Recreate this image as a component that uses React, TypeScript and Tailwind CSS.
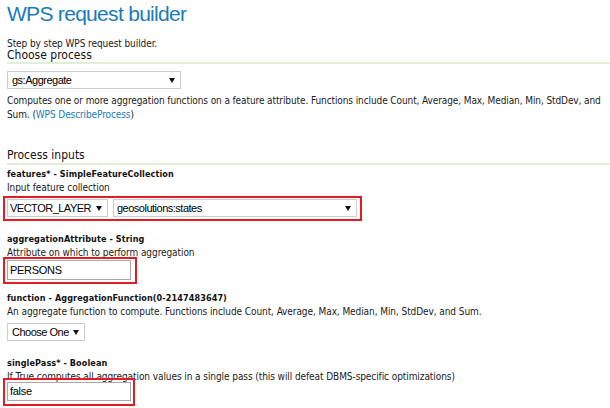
import React from "react";

const Arrow = () => (
  <svg width="6" height="5" viewBox="0 0 6 5" className="shrink-0">
    <polygon points="0,0 6,0 3,5" fill="#111" />
  </svg>
);

function FakeSelect({
  value,
  className,
  textClass = "pl-[4px]",
}: {
  value: string;
  className: string;
  textClass?: string;
}) {
  return (
    <div
      className={
        "flex h-[18px] items-center justify-between border border-[#cdcdcd] bg-white pr-[5px] font-['Liberation_Sans',Arial,sans-serif] text-[11px] leading-[16px] tracking-[-0.5px] text-black " +
        className
      }
    >
      <span className={"whitespace-nowrap " + textClass}>{value}</span>
      <Arrow />
    </div>
  );
}

function FakeInput({ value, className }: { value: string; className: string }) {
  return (
    <div
      className={
        "flex items-center border border-[#a9a9a9] bg-white pl-[2px] font-['Liberation_Sans',Arial,sans-serif] text-[11px] tracking-[-0.3px] text-black " +
        className
      }
    >
      {value}
    </div>
  );
}

export default function App() {
  const body = "font-['DejaVu_Sans_Condensed','DejaVu_Sans',sans-serif]";
  const label =
    "font-['DejaVu_Sans_Condensed','DejaVu_Sans',sans-serif] font-bold text-[9px] tracking-[0.1px] leading-[12px] h-[12px] whitespace-nowrap text-[#111]";
  const txt = "text-[10px] leading-[14px] h-[14px] whitespace-nowrap tracking-[-0.08px]";
  const head = "text-[12px] leading-[12px] h-[12px] whitespace-nowrap text-[#111]";
  return (
    <div className={"w-[610px] h-[408px] overflow-hidden bg-white pl-[7px] text-[#1a1a1a] " + body}>
      <h1 className="h-[28px] whitespace-nowrap font-['Liberation_Sans',Arial,sans-serif] text-[21px] leading-[28px] tracking-[-0.7px] text-[#1b7bb9]">
        WPS request builder
      </h1>
      <p className="mt-[10px] h-[11px] whitespace-nowrap text-[10px] leading-[11px] tracking-[-0.08px]">
        Step by step WPS request builder.
      </p>
      <h2 className={head}>Choose process</h2>
      <div className="mt-[1px] h-[2px] bg-[#e4edd8]" />

      <FakeSelect value="gs:Aggregate" className="mt-[7px] w-[174px]" />

      <p className="mt-[5px] whitespace-nowrap text-[10px] leading-[14px] tracking-[-0.1px]">
        Computes one or more aggregation functions on a feature attribute. Functions include Count, Average, Max,
        Median, Min, StdDev, and
        <br />
        Sum. (<span className="text-[#1b7bb9]">WPS DescribeProcess</span>)
      </p>

      <h2 className={"mt-[27px] " + head}>Process inputs</h2>
      <div className="mt-[2px] h-[2px] bg-[#e4edd8]" />

      <div className={"mt-[3px] " + label}>features* - SimpleFeatureCollection</div>
      <p className={"mt-[1px] " + txt}>Input feature collection</p>
      <div className="-ml-[4px] mt-[1px] flex w-[359px] gap-[5px] border-2 border-[#e31b23] pb-[2px] pl-[2px] pr-[3px] pt-[1px]">
        <FakeSelect value="VECTOR_LAYER" className="w-[101px]" textClass="pl-[2px]" />
        <FakeSelect value="geosolutions:states" className="w-[244px]" textClass="pl-[3px]" />
      </div>

      <div className={"mt-[12px] " + label}>aggregationAttribute - String</div>
      <p className={"mt-[1px] " + txt}>Attribute on which to perform aggregation</p>
      <div className="relative -ml-[4px] -mt-[3px] w-[134px] border-2 border-[#e31b23] pb-[2px] pl-[2px] pr-[4px] pt-[1px]">
        <FakeInput value="PERSONS" className="h-[20px] w-[124px]" />
      </div>

      <div className={"mt-[8px] " + label}>function - AggregationFunction(0-2147483647)</div>
      <p className={"mt-[1px] " + txt}>
        An aggregate function to compute. Functions include Count, Average, Max, Median, Min, StdDev, and Sum.
      </p>
      <FakeSelect value="Choose One" className="mt-[4px] w-[78px]" textClass="pl-[4px]" />

      <div className={"mt-[16px] " + label}>singlePass* - Boolean</div>
      <p className={"mt-[1px] " + txt}>
        If True computes all aggregation values in a single pass (this will defeat DBMS-specific optimizations)
      </p>
      <div className="relative -ml-[4px] -mt-[6px] w-[132px] border-2 border-[#e31b23] pb-[3px] pl-[2px] pr-[2px] pt-[2px]">
        <FakeInput value="false" className="h-[19px] w-[124px]" />
      </div>
    </div>
  );
}
